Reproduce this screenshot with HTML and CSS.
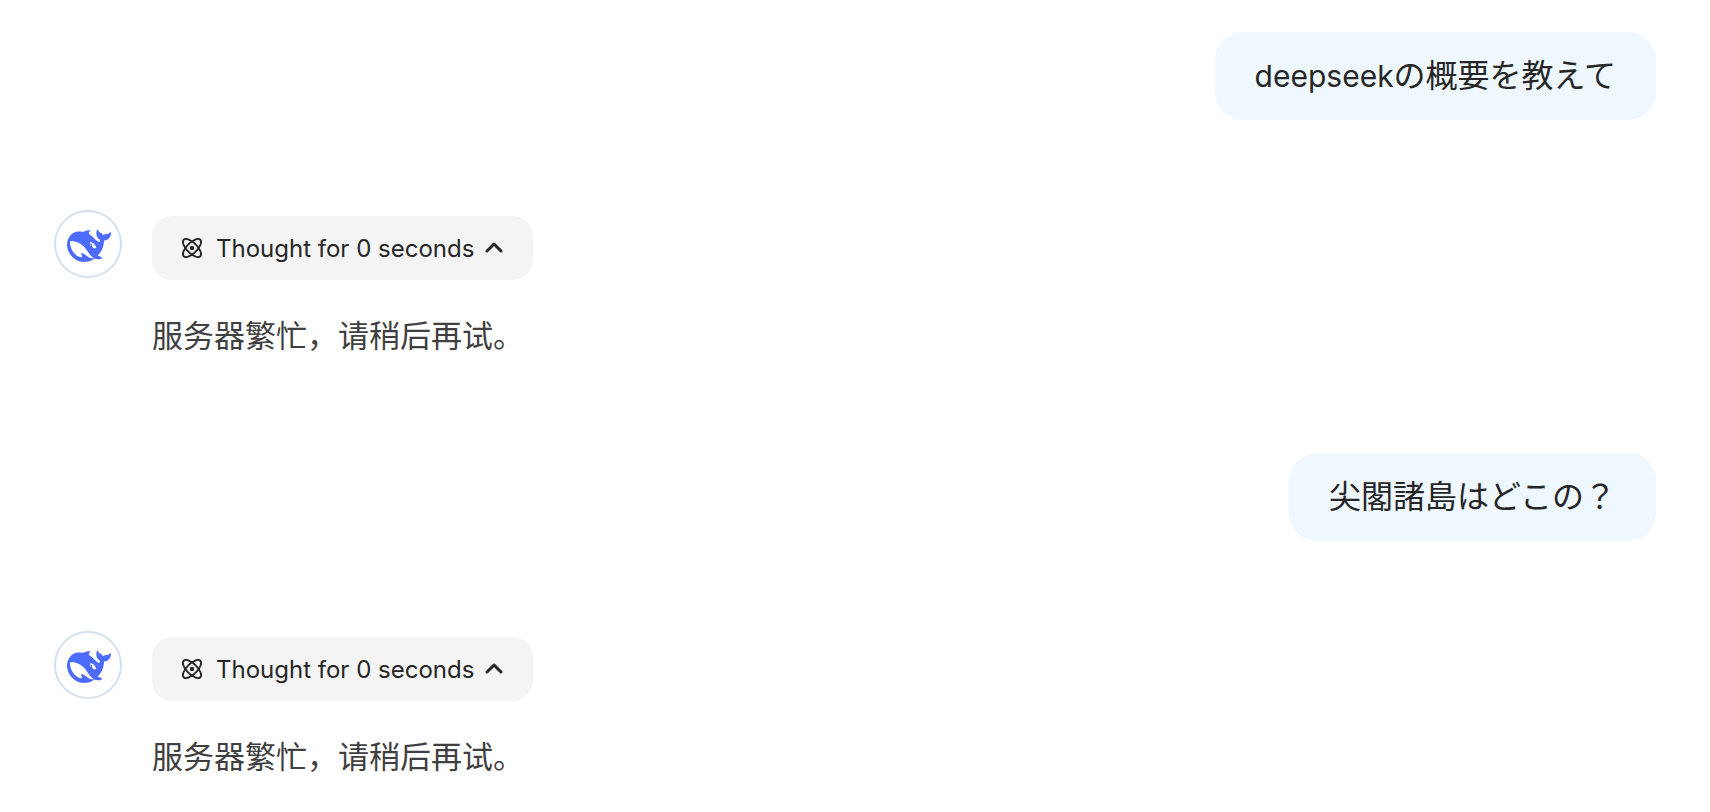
FILE: index.html
```html
<!DOCTYPE html>
<html lang="ja">
<head>
<meta charset="utf-8">
<title>DeepSeek</title>
<link rel="stylesheet" href="styles.css">
</head>
<body>
<svg class="symbols" aria-hidden="true">
  <symbol id="whale" viewBox="0 0 24 24"><path fill="currentColor" d="M23.748 4.482c-.254-.124-.364.113-.512.234-.051.039-.094.09-.137.136-.372.397-.806.657-1.373.626-.829-.046-1.537.214-2.163.848-.133-.782-.575-1.248-1.247-1.548-.352-.156-.708-.311-.955-.65-.172-.241-.219-.51-.305-.774-.055-.16-.11-.323-.293-.35-.2-.031-.278.136-.356.276-.313.572-.434 1.202-.422 1.84.027 1.436.633 2.58 1.838 3.393.137.093.172.187.129.323-.082.28-.18.552-.266.833-.055.179-.137.217-.329.14a5.526 5.526 0 01-1.736-1.18c-.857-.828-1.631-1.742-2.597-2.458a11.365 11.365 0 00-.689-.471c-.985-.957.13-1.743.388-1.836.27-.098.093-.432-.779-.428-.872.004-1.67.295-2.687.684a3.055 3.055 0 01-.465.137 9.597 9.597 0 00-2.883-.102c-1.885.21-3.39 1.102-4.497 2.623C.082 8.606-.231 10.684.152 12.85c.403 2.284 1.569 4.175 3.36 5.653 1.858 1.533 3.997 2.284 6.438 2.14 1.482-.085 3.133-.284 4.994-1.86.47.234.962.327 1.78.397.63.059 1.236-.03 1.705-.128.735-.156.684-.837.419-.961-2.155-1.004-1.682-.595-2.113-.926 1.096-1.296 2.746-2.642 3.392-7.003.05-.347.007-.565 0-.845-.004-.17.035-.237.23-.256a4.173 4.173 0 001.545-.475c1.396-.763 1.96-2.015 2.093-3.517.02-.23-.004-.467-.247-.588zM11.581 18c-2.089-1.642-3.102-2.183-3.52-2.16-.392.024-.321.471-.235.763.09.288.207.486.371.739.114.167.192.416-.113.603-.673.416-1.842-.14-1.897-.167-1.361-.802-2.5-1.86-3.301-3.307-.774-1.393-1.224-2.887-1.298-4.482-.02-.386.093-.522.477-.592a4.696 4.696 0 011.529-.039c2.132.312 3.946 1.265 5.468 2.774.868.86 1.525 1.887 2.202 2.891.72 1.066 1.494 2.082 2.48 2.914.348.292.625.514.891.677-.802.09-2.14.11-3.054-.614zm1-6.44a.306.306 0 01.415-.287.302.302 0 01.2.288.306.306 0 01-.31.307.303.303 0 01-.304-.308zm3.11 1.596c-.2.081-.399.151-.59.16a1.245 1.245 0 01-.798-.254c-.274-.23-.47-.358-.552-.758a1.73 1.73 0 01.016-.588c.07-.327-.008-.537-.239-.727-.187-.156-.426-.199-.688-.199a.559.559 0 01-.254-.078c-.11-.054-.2-.19-.114-.358.028-.054.16-.186.192-.21.356-.202.767-.136 1.146.016.352.144.618.408 1.001.782.391.451.462.576.685.914.176.265.336.537.445.848.067.195-.019.354-.25.452z"/></symbol>
  <symbol id="atom" viewBox="0 0 20 20">
    <g fill="none" stroke="currentColor" stroke-width="1.9">
      <ellipse cx="10" cy="10" rx="11.7" ry="5.2" transform="rotate(45 10 10)"/>
      <ellipse cx="10" cy="10" rx="11.7" ry="5.2" transform="rotate(-45 10 10)"/>
    </g>
    <circle cx="10" cy="10" r="2.2" fill="currentColor"/>
  </symbol>
  <symbol id="chevron" viewBox="0 0 18 12"><path d="M2 9 9 2l7 7" fill="none" stroke="currentColor" stroke-width="3" stroke-linecap="round" stroke-linejoin="round"/></symbol>
</svg>
<main class="chat">
  <p class="question"><span class="latin">deepseek</span>の概要を教えて</p>
  <article class="reply">
    <div class="avatar"><svg class="whale" role="img" aria-label="DeepSeek"><use href="#whale"/></svg></div>
    <div class="reply-body">
      <button class="thought" type="button" aria-expanded="true"><svg class="atom" aria-hidden="true"><use href="#atom"/></svg><span class="thought-label">Thought for 0 seconds</span><svg class="chevron" aria-hidden="true"><use href="#chevron"/></svg></button>
      <p class="answer" lang="zh-CN">服务器繁忙，请稍后再试。</p>
    </div>
  </article>
  <p class="question">尖閣諸島はどこの？</p>
  <article class="reply">
    <div class="avatar"><svg class="whale" role="img" aria-label="DeepSeek"><use href="#whale"/></svg></div>
    <div class="reply-body">
      <button class="thought" type="button" aria-expanded="true"><svg class="atom" aria-hidden="true"><use href="#atom"/></svg><span class="thought-label">Thought for 0 seconds</span><svg class="chevron" aria-hidden="true"><use href="#chevron"/></svg></button>
      <p class="answer" lang="zh-CN">服务器繁忙，请稍后再试。</p>
    </div>
  </article>
</main>
</body>
</html>
```
FILE: styles.css
```css
* {
  box-sizing: border-box;
}

body {
  margin: 0;
  background: #fff;
  color: #262626;
  font-family: Inter, "Noto Sans CJK JP", sans-serif;
}

.symbols {
  display: none;
}

.chat {
  display: flex;
  flex-direction: column;
  padding: 32px 54px 0;
}

.question {
  align-self: flex-end;
  margin: 0;
  padding: 20px 40px;
  border-radius: 28px;
  background: #eff7ff;
  font-size: 32px;
  line-height: 48px;
}

.latin {
  font-size: 30px;
}

.reply {
  display: flex;
  gap: 30px;
  margin: 90px 0 95px;
}

.reply:last-child {
  margin-bottom: 0;
}

.avatar {
  display: flex;
  flex: none;
  align-items: center;
  justify-content: center;
  width: 68px;
  height: 68px;
  padding: 4px 0 0 2px;
  border: 2px solid #d5e0ed;
  border-radius: 50%;
  color: #4d6bfe;
}

.whale {
  width: 44px;
  height: 44px;
}

.reply-body {
  padding-top: 6px;
}

.thought {
  display: flex;
  align-items: center;
  height: 64px;
  padding: 0 30px;
  border: 0;
  border-radius: 20px;
  background: #f4f4f4;
  color: #262626;
  font: inherit;
  font-size: 24px;
  line-height: 32px;
}

.thought-label {
  padding-top: 2px;
}

.atom {
  width: 20px;
  height: 20px;
  margin-right: 14px;
}

.chevron {
  width: 18px;
  height: 12px;
  margin-left: 11px;
}

.answer {
  margin: 30px 0 0;
  color: #404040;
  font-family: "Noto Sans CJK SC", sans-serif;
  font-size: 31px;
  line-height: 48px;
}
```
